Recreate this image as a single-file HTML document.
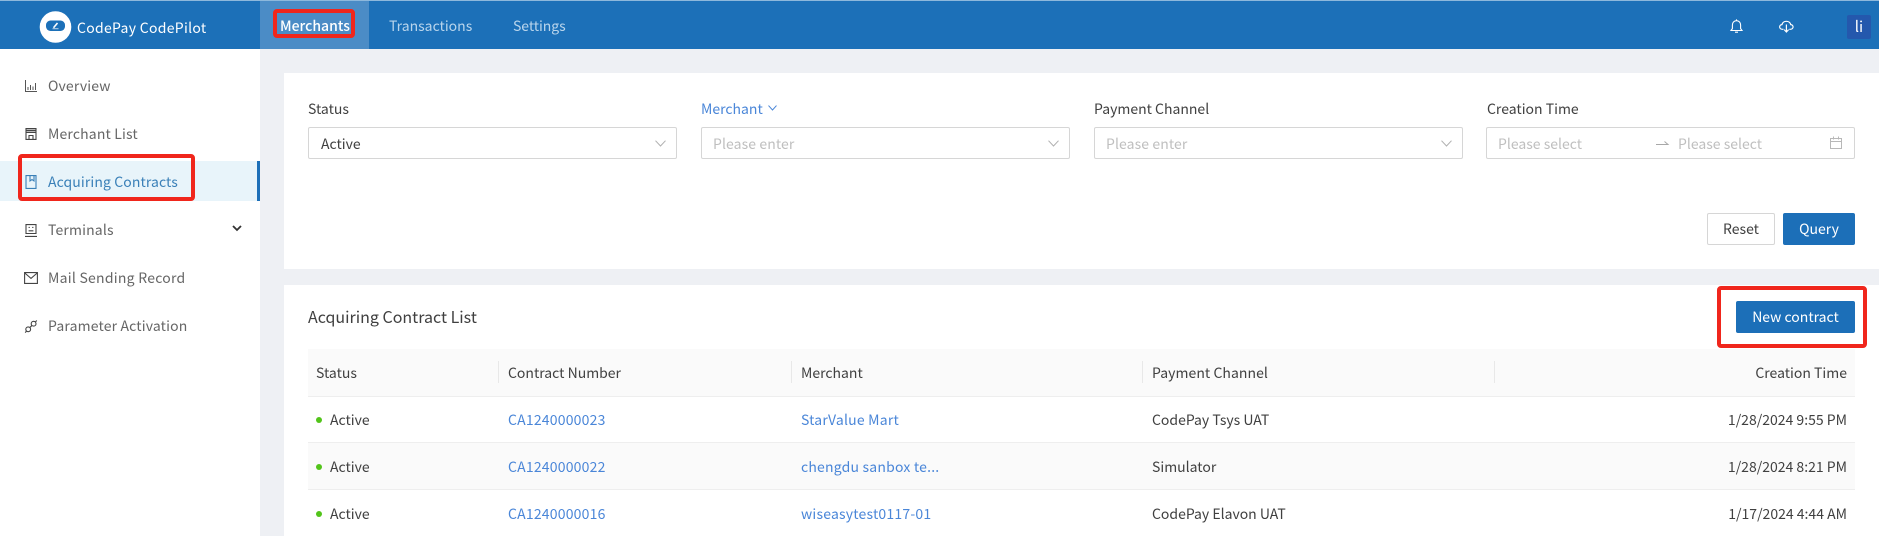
<!DOCTYPE html>
<html><head><meta charset="utf-8">
<style>
*{box-sizing:border-box}
html,body{margin:0;padding:0;width:1879px;height:536px;overflow:hidden;background:#eef0f4;font-family:"Noto Sans CJK SC","Liberation Sans",sans-serif;font-size:14px;color:#404040}
.a{position:absolute}
.t{position:absolute;white-space:nowrap;line-height:20px;height:20px}
.in{position:absolute;top:127px;height:32px;width:369px;border:1px solid #d6d6d6;border-radius:2px;background:#fff}
.ph{color:#bfbfbf}
.lnk{color:#4a86d8;letter-spacing:.2px}
.nav{color:#666;letter-spacing:.15px}
.red{position:absolute;border:4px solid #f0261c;border-radius:4px}
svg{position:absolute;overflow:visible}
.bar{position:absolute;width:1px;top:361px;height:22px;background:#e8e8e8}
</style></head><body>
<div class="a" style="left:0;top:0;width:1879px;height:49px;background:#1c70b8"></div>
<div class="a" style="left:0;top:0;width:1879px;height:1px;background:#8db8dc"></div>
<div class="a" style="left:260px;top:1px;width:109px;height:48px;background:#4b8cc6"></div>

<svg style="left:38px;top:10px" width="36" height="34" viewBox="0 0 36 34">
<circle cx="17.5" cy="17" r="15.8" fill="#fff"/><rect x="2" y="11.5" width="31" height="10" rx="3" fill="#fff"/>
<rect x="8" y="10.5" width="19" height="10.5" rx="4.5" fill="#1c70b8"/>
<path d="M15.5 17.8 L19.5 13" stroke="#fff" stroke-width="1.6"/>
<path d="M14.5 18.8 H20.5" stroke="#fff" stroke-width="0.7"/>
</svg>
<div class="t" style="left:77px;top:18px;color:#fff;font-size:14px;letter-spacing:.3px">CodePay CodePilot</div>
<div class="t" style="left:280px;top:16px;color:#fff;font-weight:500">Merchants</div>
<div class="t" style="left:389px;top:16px;color:#b9d5ec">Transactions</div>
<div class="t" style="left:513px;top:16px;color:#b9d5ec;letter-spacing:-.05px">Settings</div>
<div class="red" style="left:273px;top:9px;width:82px;height:29px"></div>

<svg style="left:1730px;top:19px" width="13" height="15" viewBox="0 0 13 15" fill="none" stroke="#fff" stroke-width="1.1">
<path d="M1 11.5 H12 L10.6 9.6 V6 C10.6 3.4 8.8 1.7 6.5 1.7 C4.2 1.7 2.4 3.4 2.4 6 V9.6 Z"/><path d="M6.5 .4V1.7M5 13.2H8"/></svg>
<svg style="left:1779px;top:20px" width="15" height="13" viewBox="0 0 15 13" fill="none" stroke="#fff" stroke-width="1.2">
<path d="M4.5 9.3 H3.4 C-.2 9.3 -.2 4.8 3 4.6 C3.9 .2 10.8 .2 11.7 4.6 C14.9 4.8 14.9 9.3 11.3 9.3 H10.3"/><path d="M7.4 4.5 V11.5"/><path d="M5.2 9.6 L7.4 12 L9.6 9.6"/></svg>
<div class="a" style="left:1847px;top:15px;width:24px;height:24px;background:#2458ad;border-radius:2px"></div>
<div class="t" style="left:1847px;top:17px;width:24px;text-align:center;color:#fff;font-size:15px">li</div>

<div class="a" style="left:0;top:49px;width:260px;height:487px;background:#fff"></div>
<div class="a" style="left:0;top:161px;width:260px;height:40px;background:#e8f4fa"></div>
<div class="a" style="left:257px;top:161px;width:3px;height:40px;background:#1c6fb8"></div>

<svg style="left:25px;top:80px" width="12" height="12" viewBox="0 0 12 12" fill="none" stroke="#555" stroke-width="1"><path d="M.5 0V11.5H12M3 10V7M5.5 10V5M8 10V6.5M10.5 10V3"/></svg>
<div class="t nav" style="left:48px;top:76px">Overview</div>
<svg style="left:25px;top:128px" width="12" height="12" viewBox="0 0 12 12" fill="none" stroke="#444" stroke-width="1.1"><path d="M1 .6H11V11.4H1ZM.8 4.4H11.2M4 11.4V7.5H8V11.4"/><path d="M1 2.5H11" stroke-width="1.5"/></svg>
<div class="t nav" style="left:48px;top:124px">Merchant List</div>
<svg style="left:25px;top:175px" width="12" height="14" viewBox="0 0 12 14" fill="none" stroke="#3a80b8" stroke-width="1.1"><path d="M1 .6H11V13.4H1ZM5 .6V6L7 4.6L9 6V.6"/></svg>
<div class="t" style="left:48px;top:172px;color:#3a80b8;letter-spacing:.1px">Acquiring Contracts</div>
<svg style="left:25px;top:224px" width="12" height="13" viewBox="0 0 12 13" fill="none" stroke="#444" stroke-width="1.1"><path d="M1 .6H11V9.5H1ZM0 12.4H12M3.6 3.4H4.8M7.2 3.4H8.4M3.6 6.8H8.4"/></svg>
<div class="t nav" style="left:48px;top:220px">Terminals</div>
<svg style="left:232px;top:225px" width="10" height="7" viewBox="0 0 10 7" fill="none" stroke="#333" stroke-width="1.8"><path d="M1 1L5 5L9 1"/></svg>
<svg style="left:24px;top:272px" width="14" height="12" viewBox="0 0 14 12" fill="none" stroke="#444" stroke-width="1.1"><path d="M.6 .6H13.4V11.4H.6ZM.8 1L7 6.4L13.2 1"/></svg>
<div class="t nav" style="left:48px;top:268px;letter-spacing:.25px">Mail Sending Record</div>
<svg style="left:25px;top:320px" width="12" height="13" viewBox="0 0 12 13" fill="none" stroke="#444" stroke-width="1.1"><circle cx="3.2" cy="9.3" r="2.4"/><circle cx="8.6" cy="3.7" r="2.4"/><path d="M4.6 7.8L7.2 5.2M.2 12.6L1.5 11.1M10.3 2L11.8.5"/></svg>
<div class="t nav" style="left:48px;top:316px">Parameter Activation</div>
<div class="red" style="left:18px;top:154px;width:177px;height:47px"></div>

<div class="a" style="left:284px;top:73px;width:1595px;height:196px;background:#fff"></div>
<div class="a" style="left:284px;top:285px;width:1595px;height:251px;background:#fff"></div>

<div class="t" style="left:308px;top:99px">Status</div>
<div class="in" style="left:308px"></div>
<div class="t" style="left:321px;top:134px">Active</div>
<svg style="left:655px;top:140px" width="11" height="7" viewBox="0 0 11 7" fill="none" stroke="#b0b0b0"><path d="M.5 .7L5.5 6L10.5 .7"/></svg>

<div class="t lnk" style="left:701px;top:99px;letter-spacing:0">Merchant</div>
<svg style="left:768px;top:105px" width="9" height="6" viewBox="0 0 9 6" fill="none" stroke="#4a86d8"><path d="M.5 .6L4.5 5L8.5 .6"/></svg>
<div class="in" style="left:701px"></div>
<div class="t ph" style="left:713px;top:134px;letter-spacing:.1px">Please enter</div>
<svg style="left:1048px;top:140px" width="11" height="7" viewBox="0 0 11 7" fill="none" stroke="#b0b0b0"><path d="M.5 .7L5.5 6L10.5 .7"/></svg>

<div class="t" style="left:1094px;top:99px">Payment Channel</div>
<div class="in" style="left:1094px"></div>
<div class="t ph" style="left:1106px;top:134px;letter-spacing:.1px">Please enter</div>
<svg style="left:1441px;top:140px" width="11" height="7" viewBox="0 0 11 7" fill="none" stroke="#b0b0b0"><path d="M.5 .7L5.5 6L10.5 .7"/></svg>

<div class="t" style="left:1487px;top:99px">Creation Time</div>
<div class="in" style="left:1486px"></div>
<div class="t ph" style="left:1498px;top:134px">Please select</div>
<svg style="left:1656px;top:140px" width="13" height="6" viewBox="0 0 13 6" fill="none" stroke="#a8a8a8"><path d="M0 4.5H12L8.5 1.5"/></svg>
<div class="t ph" style="left:1678px;top:134px">Please select</div>
<svg style="left:1830px;top:136px" width="12" height="13" viewBox="0 0 12 13" fill="none" stroke="#b8b8b8"><path d="M.5 2.5H11.5V12.5H.5ZM.5 5.5H11.5M3.5 .5V3.5M8.5 .5V3.5"/></svg>

<div class="a" style="left:1707px;top:213px;width:68px;height:32px;border:1px solid #d6d6d6;border-radius:2px"></div>
<div class="t" style="left:1707px;top:219px;width:68px;text-align:center">Reset</div>
<div class="a" style="left:1783px;top:213px;width:72px;height:32px;background:#1c6fb8;border-radius:2px"></div>
<div class="t" style="left:1783px;top:219px;width:72px;text-align:center;color:#fff">Query</div>

<div class="t" style="left:308px;top:306px;font-size:16px">Acquiring Contract List</div>
<div class="a" style="left:1736px;top:301px;width:119px;height:32px;background:#1c6fb8;border-radius:2px"></div>
<div class="t" style="left:1736px;top:307px;width:119px;text-align:center;color:#fff">New contract</div>
<div class="red" style="left:1717px;top:286px;width:150px;height:62px"></div>

<div class="a" style="left:308px;top:349px;width:1547px;height:47px;background:#fafafa"></div>
<div class="a" style="left:308px;top:396px;width:1547px;height:1px;background:#eee"></div>
<div class="a" style="left:308px;top:443px;width:1547px;height:47px;background:#fafafa"></div>
<div class="a" style="left:308px;top:442px;width:1547px;height:1px;background:#eee"></div>
<div class="a" style="left:308px;top:489px;width:1547px;height:1px;background:#eee"></div>
<div class="bar" style="left:498px"></div><div class="bar" style="left:791px"></div><div class="bar" style="left:1142px"></div><div class="bar" style="left:1494px"></div>

<div class="t" style="left:316px;top:363px">Status</div>
<div class="t" style="left:508px;top:363px">Contract Number</div>
<div class="t" style="left:801px;top:363px">Merchant</div>
<div class="t" style="left:1152px;top:363px;letter-spacing:.05px">Payment Channel</div>
<div class="t" style="right:32px;top:363px">Creation Time</div>

<div class="a" style="left:316px;top:417px;width:6px;height:6px;border-radius:50%;background:#52c41a"></div>
<div class="t" style="left:330px;top:410px">Active</div>
<div class="t lnk" style="left:508px;top:410px">CA1240000023</div>
<div class="t lnk" style="left:801px;top:410px">StarValue Mart</div>
<div class="t" style="left:1152px;top:410px">CodePay Tsys UAT</div>
<div class="t" style="right:32px;top:410px">1/28/2024 9:55 PM</div>

<div class="a" style="left:316px;top:464px;width:6px;height:6px;border-radius:50%;background:#52c41a"></div>
<div class="t" style="left:330px;top:457px">Active</div>
<div class="t lnk" style="left:508px;top:457px">CA1240000022</div>
<div class="t lnk" style="left:801px;top:457px">chengdu sanbox te...</div>
<div class="t" style="left:1152px;top:457px">Simulator</div>
<div class="t" style="right:32px;top:457px">1/28/2024 8:21 PM</div>

<div class="a" style="left:316px;top:511px;width:6px;height:6px;border-radius:50%;background:#52c41a"></div>
<div class="t" style="left:330px;top:504px">Active</div>
<div class="t lnk" style="left:508px;top:504px">CA1240000016</div>
<div class="t lnk" style="left:801px;top:504px">wiseasytest0117-01</div>
<div class="t" style="left:1152px;top:504px">CodePay Elavon UAT</div>
<div class="t" style="right:32px;top:504px">1/17/2024 4:44 AM</div>
</body></html>
